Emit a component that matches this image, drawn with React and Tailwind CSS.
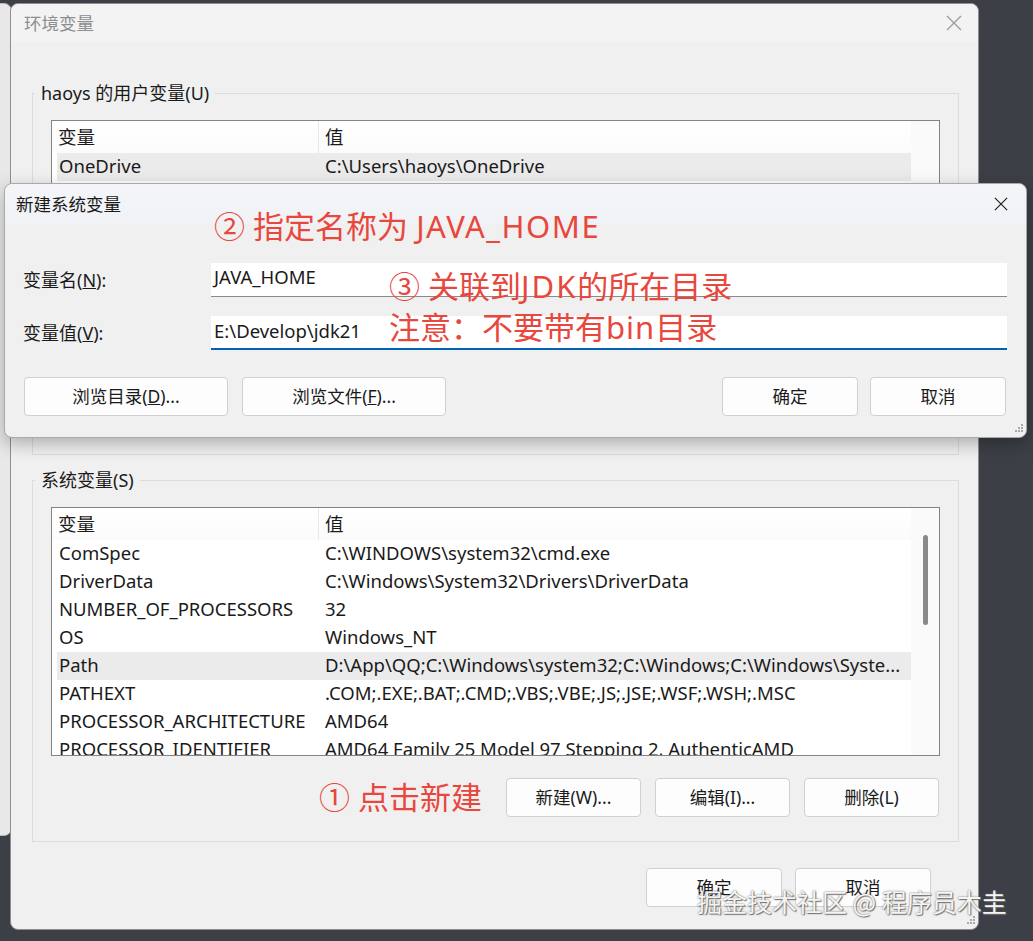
import React from "react";

const ui = "font-['Noto_Sans','Noto_Sans_CJK_SC',sans-serif]";
const cjk = "font-['Noto_Sans_CJK_SC',sans-serif]";

const userRows = [
  ["OneDrive", "C:\\Users\\haoys\\OneDrive"],
  ["OneDriveConsumer", "C:\\Users\\haoys\\OneDrive"],
  ["Path", "C:\\Users\\haoys\\AppData\\Local\\Microsoft\\WindowsApps;"],
  ["TEMP", "C:\\Users\\haoys\\AppData\\Local\\Temp"],
  ["TMP", "C:\\Users\\haoys\\AppData\\Local\\Temp"],
];

const sysRows = [
  ["ComSpec", "C:\\WINDOWS\\system32\\cmd.exe"],
  ["DriverData", "C:\\Windows\\System32\\Drivers\\DriverData"],
  ["NUMBER_OF_PROCESSORS", "32"],
  ["OS", "Windows_NT"],
  ["Path", "D:\\App\\QQ;C:\\Windows\\system32;C:\\Windows;C:\\Windows\\Syste..."],
  ["PATHEXT", ".COM;.EXE;.BAT;.CMD;.VBS;.VBE;.JS;.JSE;.WSF;.WSH;.MSC"],
  ["PROCESSOR_ARCHITECTURE", "AMD64"],
  ["PROCESSOR_IDENTIFIER", "AMD64 Family 25 Model 97 Stepping 2, AuthenticAMD"],
];

function CloseIcon({ className, color }) {
  return (
    <svg viewBox="0 0 16 16" className={className} fill="none">
      <path d="M1 1 L15 15 M15 1 L1 15" stroke={color} strokeWidth="1.3" />
    </svg>
  );
}

function Grip({ className }) {
  return (
    <svg viewBox="0 0 12 12" className={className}>
      <rect x="9" y="1" width="2" height="2" fill="#a8a8a8" />
      <rect x="6" y="4" width="2" height="2" fill="#a8a8a8" />
      <rect x="9" y="4" width="2" height="2" fill="#a8a8a8" />
      <rect x="3" y="7" width="2" height="2" fill="#a8a8a8" />
      <rect x="6" y="7" width="2" height="2" fill="#a8a8a8" />
      <rect x="9" y="7" width="2" height="2" fill="#a8a8a8" />
    </svg>
  );
}

function Btn({ children, className }) {
  return (
    <div
      className={`flex items-center justify-center h-[39px] rounded-[4px] border border-[#d0d0d0] bg-[#fdfdfd] text-[17.5px] text-[#1a1a1a] ${className}`}
    >
      {children}
    </div>
  );
}

function VarList({ rows, selected, thumb }) {
  return (
    <div className="flex h-[249px] border border-[#838383] bg-white overflow-hidden">
      <div className="flex-1 flex flex-col">
        <div className="flex h-[32px] shrink-0 items-center bg-gradient-to-b from-white to-[#fbfbfb]">
          <div className={`w-[267px] h-full flex items-center pl-[6px] border-r border-[#e8e8e8] ${cjk}`}>
            变量
          </div>
          <div className={`pl-[6px] ${cjk}`}>值</div>
        </div>
        {rows.map((r, i) => (
          <div
            key={r[0]}
            className={`flex h-[28px] shrink-0 items-center ml-[5px] pb-[2px] ${i === selected ? "bg-[#ebebeb]" : ""}`}
          >
            <div className="w-[262px] pl-[2px] whitespace-nowrap">{r[0]}</div>
            <div className="pl-[6px] whitespace-nowrap">{r[1]}</div>
          </div>
        ))}
      </div>
      <div className="w-[28px] shrink-0 bg-[#fafafa] flex justify-center">
        {thumb ? <div className="w-[5px] h-[90px] mt-[27px] rounded-full bg-[#8a8a8a]" /> : null}
      </div>
    </div>
  );
}

function Group({ title, rows, selected, thumb, buttons }) {
  return (
    <fieldset className="ml-[21px] mr-[19px] border border-[#dcdcdc]">
      <legend className={`ml-[2px] px-[6px] text-[18px] leading-[26px] text-[#1a1a1a] ${ui}`}>{title}</legend>
      <div className="px-[18px] pt-[14px] pb-[24px]">
        <VarList rows={rows} selected={selected} thumb={thumb} />
        <div className="flex justify-end gap-[14px] mt-[22px] pr-[1px]">
          {buttons.map((b) => (
            <Btn key={b} className="w-[135px] h-[38px]">{b}</Btn>
          ))}
        </div>
      </div>
    </fieldset>
  );
}

export default function App() {
  return (
    <div className={`relative w-[1033px] h-[941px] overflow-hidden bg-[#3c3f46] text-[18.5px] text-[#1a1a1a] ${ui}`}>
      {/* window behind */}
      <div className="absolute left-[-20px] top-[3px] w-[32px] h-[833px] rounded-[8px] bg-[#e8e8e8] border border-[#b8b8b8]" />

      {/* 环境变量 main window */}
      <div className="absolute left-[10px] top-[3px] w-[969px] h-[927px] rounded-[8px] bg-[#f0f0f0] border border-[#8e8e8e] flex flex-col">
        <div className="flex h-[38px] items-center justify-between pl-[13px] pr-[16px] rounded-t-[8px] bg-[#f3f3f3]">
          <div className={`text-[17.5px] text-[#8e8e8e] ${cjk}`}>环境变量</div>
          <CloseIcon className="w-[16px] h-[16px]" color="#9a9a9a" />
        </div>
        <div className="mt-[38px]">
          <Group
            title="haoys 的用户变量(U)"
            rows={userRows}
            selected={0}
            buttons={["新建(N)...", "编辑(E)...", "删除(D)"]}
          />
        </div>
        <div className="mt-[12px]">
          <Group
            title="系统变量(S)"
            rows={sysRows}
            selected={4}
            thumb
            buttons={["新建(W)...", "编辑(I)...", "删除(L)"]}
          />
        </div>
        <div className="flex justify-end gap-[13px] mt-[26px] pr-[47px]">
          <Btn className="w-[136px] h-[38px]">确定</Btn>
          <Btn className="w-[136px] h-[38px]">取消</Btn>
        </div>
        <Grip className="absolute right-[2px] bottom-[2px] w-[12px] h-[12px]" />
      </div>

      {/* 新建系统变量 dialog */}
      <div className="absolute left-[4px] top-[183px] w-[1023px] h-[255px] rounded-[8px] bg-[#f0f0f0] border border-[#a9a9a9] shadow-[0_6px_18px_rgba(0,0,0,0.28)] flex flex-col">
        <div className="flex h-[40px] items-center justify-between pl-[11px] pr-[18px] rounded-t-[8px] bg-gradient-to-b from-[#f3f5f9] to-[#f1f2f5]">
          <div className={`text-[17.5px] ${cjk}`}>新建系统变量</div>
          <CloseIcon className="w-[14px] h-[14px]" color="#1a1a1a" />
        </div>
        <div className="flex items-center mt-[39px] pl-[18px] pr-[19px]">
          <div className="w-[188px] text-[18px]">
            变量名(<span className="underline">N</span>):
          </div>
          <div className="flex-1 h-[34px] bg-white border-b border-[#8a8a8a] pl-[3px] leading-[28px]">JAVA_HOME</div>
        </div>
        <div className="flex items-center mt-[19px] pl-[18px] pr-[19px]">
          <div className="w-[188px] text-[18px]">
            变量值(<span className="underline">V</span>):
          </div>
          <div className="flex-1 h-[34px] bg-white border-b-2 border-[#0061b5] pl-[3px] leading-[30px]">E:\Develop\jdk21</div>
        </div>
        <div className="flex items-center mt-[27px] pl-[19px] pr-[20px]">
          <Btn className="w-[204px]">
            浏览目录(<span className="underline">D</span>)...
          </Btn>
          <Btn className="w-[204px] ml-[14px]">
            浏览文件(<span className="underline">F</span>)...
          </Btn>
          <div className="flex-1" />
          <Btn className="w-[136px]">确定</Btn>
          <Btn className="w-[136px] ml-[12px]">取消</Btn>
        </div>
        <Grip className="absolute right-[2px] bottom-[2px] w-[12px] h-[12px]" />
      </div>

      {/* annotations */}
      <div className={`absolute left-[214px] top-[205px] text-[31px] leading-[42px] text-[#e8473d] ${ui}`}>
        ② 指定名称为 <span className="tracking-[1.5px]">JAVA_HOME</span>
      </div>
      <div className={`absolute left-[389px] top-[266px] text-[31px] leading-[41px] text-[#e8473d] ${ui}`}>
        <div>
          ③ 关联到<span className="tracking-[2px]">JDK</span>的所在目录
        </div>
        <div>
          注意：不要带有<span className="tracking-[1px]">bin</span>目录
        </div>
      </div>
      <div className={`absolute left-[319px] top-[776px] text-[31px] leading-[42px] text-[#e8473d] ${ui}`}>
        ① 点击新建
      </div>

      {/* watermark */}
      <div
        className={`absolute left-[697px] top-[884px] text-[25px] leading-[34px] text-[#f4f4f4] [text-shadow:0_0_2px_#666,1px_1px_1px_#777] ${cjk}`}
      >
        掘金技术社区 @ 程序员木圭
      </div>
    </div>
  );
}
